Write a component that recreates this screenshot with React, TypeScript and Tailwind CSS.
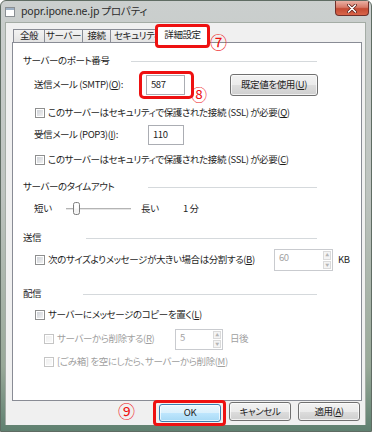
import React from "react";

function Checkbox({ disabled = false }: { disabled?: boolean }) {
  return (
    <span
      className={
        disabled
          ? "block h-[10px] w-[10px] shrink-0 border border-[#c5c5c5] bg-[linear-gradient(135deg,#eeeeee,#fbfbfb)] shadow-[inset_0_0_0_1px_#ffffff]"
          : "block h-[10px] w-[10px] shrink-0 border border-[#8e8f8f] bg-[linear-gradient(135deg,#c9cdd3,#f6f6f6)] shadow-[inset_0_0_0_1px_#ffffff]"
      }
    />
  );
}

function Heading({ text, line }: { text: string; line: string }) {
  return (
    <div className="flex h-[16px] w-[294px] shrink-0 items-center">
      <span>{text}</span>
      <span className={"ml-auto h-px bg-[#d5d9dc] " + line} />
    </div>
  );
}

function Spin({ value, className }: { value: string; className: string }) {
  return (
    <div className={"flex shrink-0 border border-[#c9cbcf] bg-white " + className}>
      <span className="flex-1 pl-[4px] pt-[3px] text-[#a3a3a3]">{value}</span>
      <span className="flex w-[10px] flex-col gap-px p-px">
        <span className="flex flex-1 items-center justify-center border border-[#dadada] bg-[#f4f4f4] text-[4px] leading-none text-[#b5b5b5]">
          ▲
        </span>
        <span className="flex flex-1 items-center justify-center border border-[#dadada] bg-[#f4f4f4] text-[4px] leading-none text-[#b5b5b5]">
          ▼
        </span>
      </span>
    </div>
  );
}

const btn =
  "flex shrink-0 items-center justify-center rounded-[3px] border border-[#707070] bg-[linear-gradient(#f2f2f2_0%,#ebebeb_50%,#dddddd_50%,#cfcfcf_100%)] shadow-[inset_0_0_0_1px_rgba(255,255,255,0.7)]";

const tab =
  "flex h-[13px] items-center justify-center whitespace-nowrap border border-b-0 border-[#898c95] bg-[linear-gradient(#f3f3f3,#e3e3e3)]";

export default function App() {
  return (
    <div className="relative h-[432px] w-[372px] overflow-hidden rounded-t-[6px] border border-[#5f6c63] bg-[linear-gradient(180deg,#cbcfce_0%,#bdc3bf_45%,#98a898_85%,#5f8070_100%)] font-['Noto_Sans_CJK_JP','Noto_Sans',sans-serif] text-[9.5px] leading-none tracking-[-0.4px] text-[#1e1e1e] [font-feature-settings:'palt']">
      {/* title bar */}
      <div className="flex h-[21px] items-start">
        <svg className="ml-[4px] mt-[6px]" width="10" height="10" viewBox="0 0 10 10">
          <rect x="0.5" y="0.5" width="9" height="9" fill="#ffffff" stroke="#8a8f93" />
          <rect x="1" y="1" width="8" height="2" fill="#9db0c4" />
        </svg>
        <span className="ml-[6px] mt-[5px] text-[10.5px] tracking-[-0.2px] text-[#2b2b2b]">popr.ipone.ne.jp プロパティ</span>
        <div className="ml-auto mr-[2px] flex h-[15px] w-[34px] items-center justify-center rounded-b-[4px] border border-t-0 border-[#70302a] bg-[linear-gradient(180deg,#eab0a4_0%,#d77a68_45%,#c44a33_55%,#d9664a_100%)]">
          <svg width="10" height="9" viewBox="0 0 10 9">
            <path d="M1.5 1 L8.5 8 M8.5 1 L1.5 8" stroke="#5a1d15" strokeWidth="3" strokeLinecap="round" />
            <path d="M1.5 1 L8.5 8 M8.5 1 L1.5 8" stroke="#ffffff" strokeWidth="1.6" strokeLinecap="round" />
          </svg>
        </div>
      </div>

      {/* client area */}
      <div className="ml-[4px] flex h-[403px] w-[361px] flex-col border border-b-0 border-[#a4aca5] bg-[#f0f0f0]">
        {/* tabs */}
        <div className="flex h-[19px] shrink-0 items-end pl-[7px]">
          <div className={tab + " w-[32px]"}>全般</div>
          <div className={tab + " -ml-px w-[39px]"}>サーバー</div>
          <div className={tab + " -ml-px w-[29px]"}>接続</div>
          <div className={tab + " -ml-px w-[47px] !justify-start pl-[3px]"}>セキュリティ</div>
          <div className="relative z-10 -mb-[6px] -ml-[2px] flex h-[24px] w-[55px] items-center justify-center whitespace-nowrap rounded-[4px] border-[3px] border-[#ee1111] bg-white pb-[2px]">
            詳細設定
            <span className="absolute left-[100%] top-[6px] ml-[3px] text-[17px] leading-none tracking-normal text-[#ee1111]">⑦</span>
          </div>
        </div>

        {/* panel */}
        <div className="ml-[6px] flex h-[359px] w-[350px] shrink-0 flex-col border border-[#898c95] bg-white pl-[10px]">
          <div className="mt-[10px]">
            <Heading text="サーバーのポート番号" line="w-[186px]" />
          </div>

          <div className="ml-[11px] mt-[4px] flex h-[24px] shrink-0 items-center">
            <span className="w-[105px] shrink-0">
              送信メール (SMTP)(<u>O</u>):
            </span>
            <div className="relative shrink-0 rounded-[5px] border-[3px] border-[#ee1111] py-[1px] pl-[4px] pr-[6px]">
              <div className="h-[20px] w-[39px] border border-[#abadb3] bg-white pl-[4px] pt-[4px]">587</div>
              <span className="absolute left-[100%] top-[12px] text-[16px] leading-none tracking-normal text-[#ee1111]">⑧</span>
            </div>
            <div className={btn + " ml-[36px] h-[22px] w-[88px]"}>
              既定値を使用(<u>U</u>)
            </div>
          </div>

          <div className="ml-[12px] mt-[8px] flex h-[16px] shrink-0 items-center gap-[3px]">
            <Checkbox />
            <span>
              このサーバーはセキュリティで保護された接続 (SSL) が必要(<u>Q</u>)
            </span>
          </div>

          <div className="ml-[11px] mt-[4px] flex h-[20px] shrink-0 items-center">
            <span className="w-[114px] shrink-0">
              受信メール (POP3)(<u>I</u>):
            </span>
            <div className="h-[20px] w-[36px] border border-[#abadb3] bg-white pl-[4px] pt-[4px]">110</div>
          </div>

          <div className="ml-[12px] mt-[7px] flex h-[16px] shrink-0 items-center gap-[3px]">
            <Checkbox />
            <span>
              このサーバーはセキュリティで保護された接続 (SSL) が必要(<u>C</u>)
            </span>
          </div>

          <div className="mt-[11px]">
            <Heading text="サーバーのタイムアウト" line="w-[169px]" />
          </div>

          <div className="ml-[11px] mt-[6px] flex h-[16px] shrink-0 items-center">
            <span className="w-[32px] shrink-0">短い</span>
            <svg width="65" height="16" viewBox="0 0 65 16" className="shrink-0">
              <rect x="0" y="7" width="65" height="1" fill="#b4b4b4" />
              <rect x="0" y="8" width="65" height="1" fill="#e6e6e6" />
              <rect x="7.5" y="1.5" width="6" height="12" rx="2" fill="#f4f4f4" stroke="#7d7d7d" />
              <rect x="8.5" y="2.5" width="4" height="5" fill="#ffffff" />
            </svg>
            <span className="ml-[10px] w-[42px] shrink-0">長い</span>
            <span>1 分</span>
          </div>

          <div className="mt-[13px]">
            <Heading text="送信" line="w-[231px]" />
          </div>

          <div className="ml-[12px] mt-[3px] flex h-[22px] shrink-0 items-center">
            <div className="flex w-[239px] shrink-0 items-center gap-[3px]">
              <Checkbox />
              <span className="whitespace-nowrap">
                次のサイズよりメッセージが大きい場合は分割する(<u>B</u>)
              </span>
            </div>
            <Spin value="60" className="h-[22px] w-[59px]" />
            <span className="ml-[5px]">KB</span>
          </div>

          <div className="mt-[15px]">
            <Heading text="配信" line="w-[234px]" />
          </div>

          <div className="ml-[12px] mt-[5px] flex h-[16px] shrink-0 items-center gap-[3px]">
            <Checkbox />
            <span>
              サーバーにメッセージのコピーを置く(<u>L</u>)
            </span>
          </div>

          <div className="ml-[21px] mt-[5px] flex h-[22px] shrink-0 items-center text-[#a0a0a0]">
            <div className="flex w-[131px] shrink-0 items-center gap-[3px]">
              <Checkbox disabled />
              <span className="whitespace-nowrap">
                サーバーから削除する(<u>R</u>)
              </span>
            </div>
            <Spin value="5" className="h-[21px] w-[48px]" />
            <span className="ml-[7px]">日後</span>
          </div>

          <div className="ml-[21px] mt-[4px] flex h-[16px] shrink-0 items-center gap-[3px] text-[#a0a0a0]">
            <Checkbox disabled />
            <span>
              [ごみ箱] を空にしたら、サーバーから削除(<u>M</u>)
            </span>
          </div>
        </div>

        {/* buttons */}
        <div className="flex shrink-0 items-start justify-end pr-[5px]">
          <span className="mr-[18px] mt-[1px] text-[17px] leading-none tracking-normal text-[#ee1111]">⑨</span>
          <div className="-mt-[1px] rounded-[4px] border-[3px] border-[#ee1111] py-[1px] pl-[3px] pr-[2px]">
            <div className="flex h-[18px] w-[62px] items-center justify-center rounded-[3px] border border-[#3c7fb1] bg-[linear-gradient(#eaf6fd_0%,#d9f0fc_50%,#bee6fd_50%,#a7d9f5_100%)] shadow-[inset_0_0_0_1px_rgba(255,255,255,0.7)]">
              OK
            </div>
          </div>
          <div className={btn + " ml-[3px] mt-[1px] h-[19px] w-[62px]"}>キャンセル</div>
          <div className={btn + " ml-[7px] mt-[1px] h-[19px] w-[62px]"}>
            適用(<u>A</u>)
          </div>
        </div>
      </div>
    </div>
  );
}
